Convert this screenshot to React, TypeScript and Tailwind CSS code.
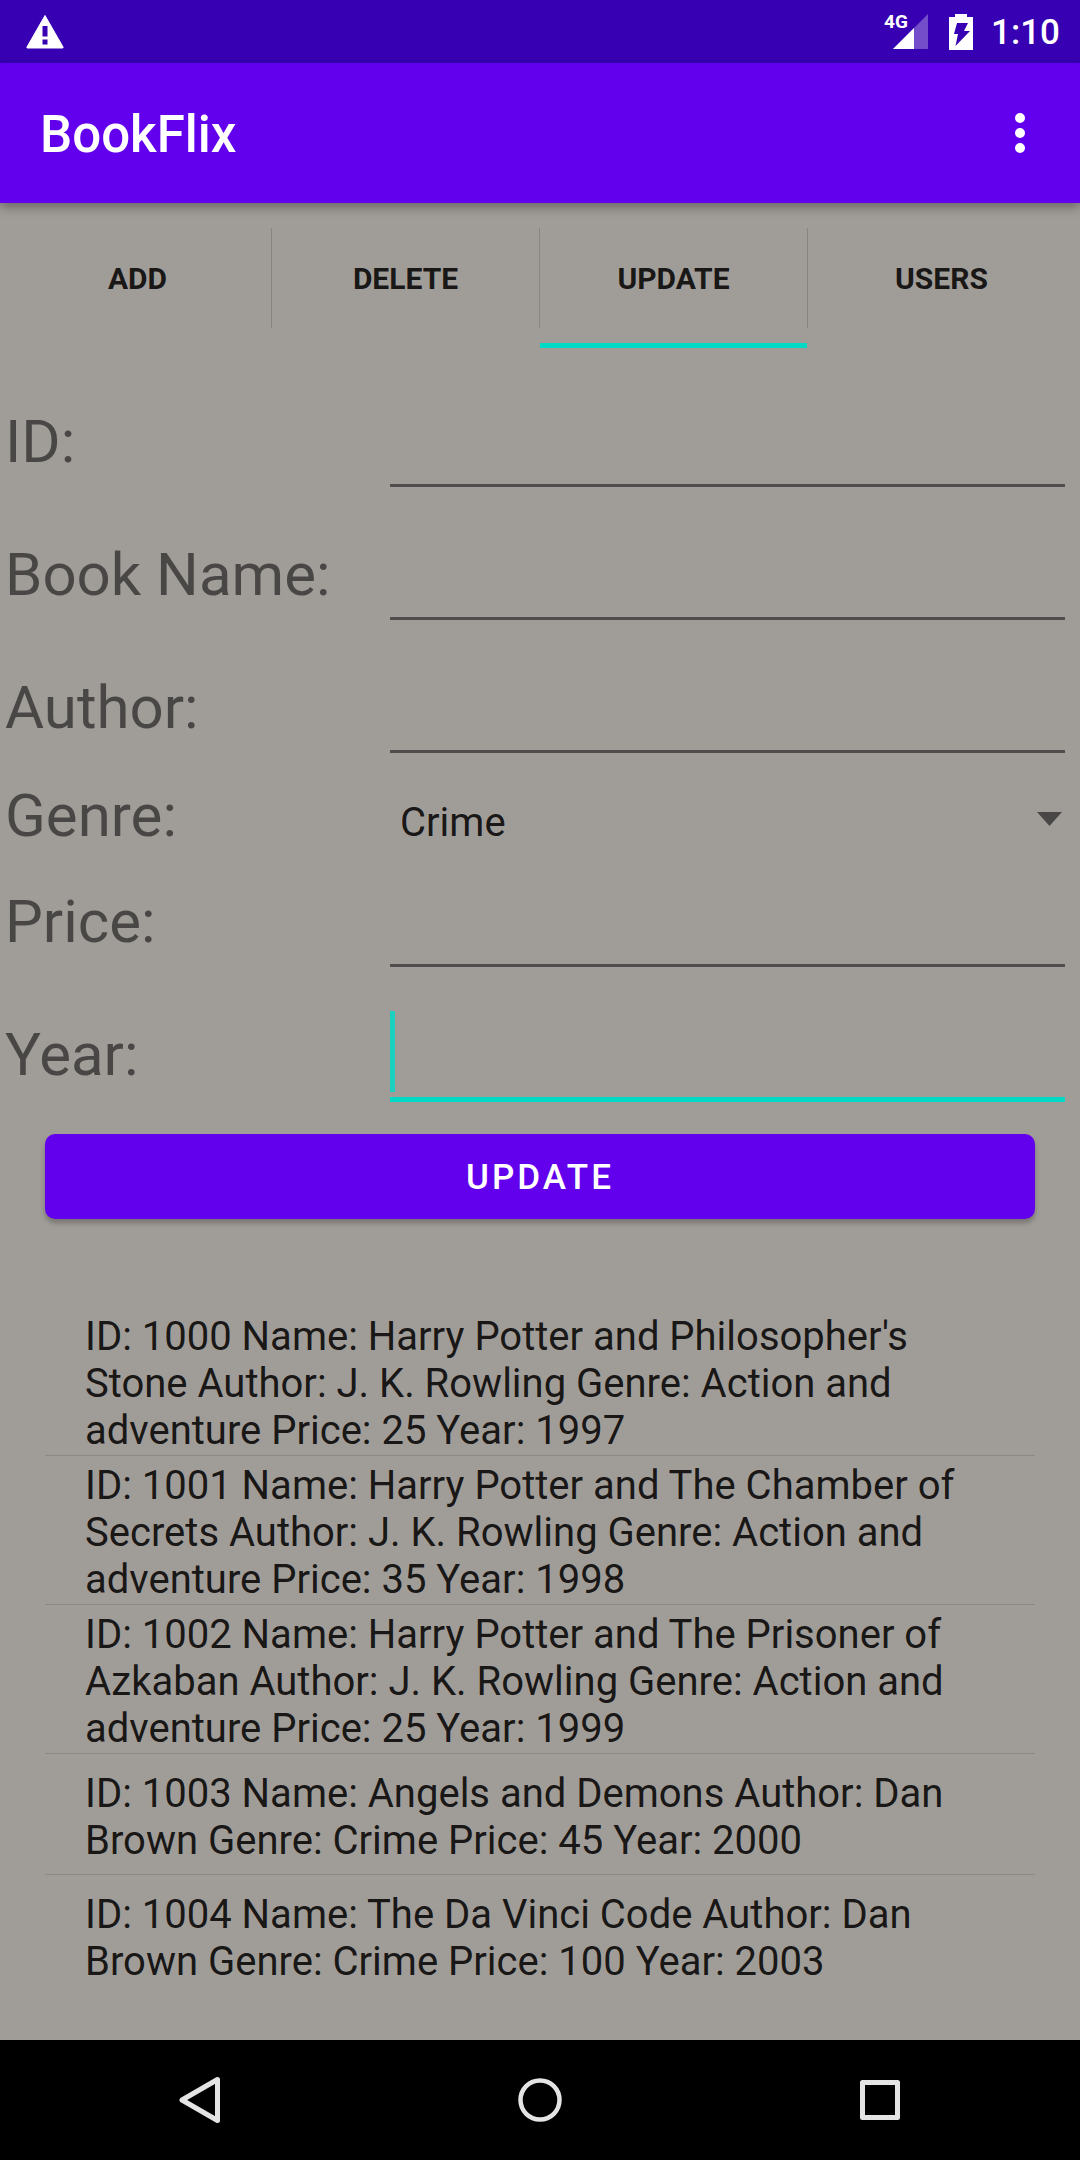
import { Fragment, useState } from "react";

type Book = {
  id: number;
  name: string;
  author: string;
  genre: string;
  price: number;
  year: number;
};

const BOOKS: Book[] = [
  { id: 1000, name: "Harry Potter and Philosopher's Stone", author: "J. K. Rowling", genre: "Action and adventure", price: 25, year: 1997 },
  { id: 1001, name: "Harry Potter and The Chamber of Secrets", author: "J. K. Rowling", genre: "Action and adventure", price: 35, year: 1998 },
  { id: 1002, name: "Harry Potter and The Prisoner of Azkaban", author: "J. K. Rowling", genre: "Action and adventure", price: 25, year: 1999 },
  { id: 1003, name: "Angels and Demons", author: "Dan Brown", genre: "Crime", price: 45, year: 2000 },
  { id: 1004, name: "The Da Vinci Code", author: "Dan Brown", genre: "Crime", price: 100, year: 2003 },
];

const TABS = ["ADD", "DELETE", "UPDATE", "USERS"];

function StatusBar() {
  return (
    <div className="flex h-[63px] items-center bg-[#3700b3] pr-5 pl-6 text-white">
      <svg className="h-9 w-[42px]" viewBox="0 0 42 36" fill="none">
        <path d="M21 1.500 L39 33 Q39.500 34 38.500 34 L3.500 34 Q2.500 34 3 33 Z" fill="#fff" stroke="#fff" strokeLinejoin="round" />
        <path d="M18.500 12h5v10.500h-5zM18.500 25.500h5v5h-5z" fill="#3700b3" />
      </svg>
      <div className="ml-auto flex items-center">
        <div className="relative h-9 w-11">
          <span className="absolute top-0 left-0 text-[19px] leading-4 font-bold">4G</span>
          <svg className="h-9 w-11" viewBox="0 0 44 36">
            <path d="M44 0V35H9Z" fill="#fff" fillOpacity="0.3" />
            <path d="M30 14V35H9Z" fill="#fff" />
          </svg>
        </div>
        <svg className="ml-[21px] h-9 w-6" viewBox="0 0 24 36">
          <path d="M6 0h12v3h6v33H0V3h6z" fill="#fff" />
          <path d="M8 9h11l-4 8h6L6.500 32l2.500-12H5z" fill="#3700b3" />
        </svg>
        <span className="ml-[18px] pt-0.5 text-[35px] leading-none font-medium">1:10</span>
      </div>
    </div>
  );
}

function AppBar() {
  return (
    <header className="relative z-10 flex h-[140px] items-center justify-between bg-[#6200ee] pr-[35px] pl-10 text-white shadow-[0_4px_10px_rgba(0,0,0,0.35)]">
      <h1 className="pt-0.5 text-[51px] leading-none font-medium">BookFlix</h1>
      <button type="button" aria-label="More options" className="px-5 py-3">
        <svg className="h-10 w-[10px]" viewBox="0 0 10 40" fill="#fff">
          <circle cx="5" cy="5" r="5" />
          <circle cx="5" cy="20" r="5" />
          <circle cx="5" cy="35" r="5" />
        </svg>
      </button>
    </header>
  );
}

function TabBar({ active, onSelect }: { active: string; onSelect: (tab: string) => void }) {
  return (
    <nav className="mt-[5px] flex h-[140px] pr-[5px] pl-1" role="tablist">
      {TABS.map((tab, i) => (
        <Fragment key={tab}>
          {i > 0 && <div className="my-5 w-px bg-black/15" />}
          <button
            type="button"
            role="tab"
            aria-selected={tab === active}
            onClick={() => onSelect(tab)}
            className={
              tab === active
                ? "flex-1 basis-0 border-y-[5px] border-t-transparent border-b-[#03dac5] text-[30px] font-bold"
                : "flex-1 basis-0 border-y-[5px] border-transparent text-[30px] font-bold"
            }
          >
            {tab}
          </button>
        </Fragment>
      ))}
    </nav>
  );
}

function Field({ id, label, focused = false }: { id: string; label: string; focused?: boolean }) {
  return (
    <div className="flex h-[133px]">
      <label htmlFor={id} className="w-[385px] pt-[39px] text-[60px] leading-[70px] text-black/54">
        {label}
      </label>
      <div className="relative flex-1">
        <input
          id={id}
          type="text"
          className={
            focused
              ? "h-[121px] w-full border-b-[5px] border-[#03dac5] bg-transparent pt-8 text-[60px] caret-transparent outline-none"
              : "h-[119px] w-full border-b-[3px] border-black/50 bg-transparent pt-8 text-[60px] outline-none"
          }
        />
        {focused && <div className="absolute top-[30px] left-0 h-[81px] w-[5px] bg-[#1bd0be]" />}
      </div>
    </div>
  );
}

function GenreField() {
  return (
    <div className="flex h-[81px]">
      <label htmlFor="genre" className="w-[385px] pt-[14px] text-[60px] leading-[70px] text-black/54">
        Genre:
      </label>
      <div className="relative flex-1">
        <select
          id="genre"
          defaultValue="Crime"
          className="mt-[32px] h-[47px] w-full appearance-none bg-transparent pl-[10px] text-[40px] leading-[47px] outline-none"
        >
          <option>Crime</option>
          <option>Action and adventure</option>
        </select>
        <svg className="pointer-events-none absolute top-[45px] right-[3px] h-[14px] w-[25px]" viewBox="0 0 25 14">
          <path d="M0 0h25L12.500 14z" fill="#000" fillOpacity="0.54" />
        </svg>
      </div>
    </div>
  );
}

function BookList() {
  return (
    <ul className="mx-[45px] mt-[88px] text-[40px] leading-[47px]">
      {BOOKS.map((b) => (
        <li
          key={b.id}
          className="box-content flex min-h-[113px] items-center border-b border-black/12 px-10 pt-[6px] pb-px last:border-b-0"
        >
          {`ID: ${b.id} Name: ${b.name} Author: ${b.author} Genre: ${b.genre} Price: ${b.price} Year: ${b.year}`}
        </li>
      ))}
    </ul>
  );
}

function NavigationBar() {
  return (
    <div className="mt-auto flex h-[120px] items-center bg-black">
      <div className="flex flex-1 justify-end">
        <button type="button" aria-label="Back">
          <svg className="h-12 w-11" viewBox="0 0 44 48" fill="none" stroke="#e4e4e4" strokeWidth="5" strokeLinejoin="round">
            <path d="M41.500 3.500V44.500L6 24Z" />
          </svg>
        </button>
      </div>
      <button type="button" aria-label="Home" className="mx-[296px]">
        <svg className="h-12 w-12" viewBox="0 0 48 48" fill="none" stroke="#e4e4e4" strokeWidth="4.500">
          <circle cx="24" cy="24" r="19.500" />
        </svg>
      </button>
      <div className="flex flex-1">
        <button type="button" aria-label="Recent apps">
          <svg className="h-12 w-11" viewBox="0 0 44 48" fill="none" stroke="#e4e4e4" strokeWidth="5" strokeLinejoin="round">
            <rect x="2.500" y="6.500" width="35" height="35" />
          </svg>
        </button>
      </div>
    </div>
  );
}

export default function App() {
  const [tab, setTab] = useState("UPDATE");
  return (
    <div className="flex min-h-screen flex-col bg-[#a09c98] font-['Roboto',sans-serif] text-black/87">
      <StatusBar />
      <AppBar />
      <main>
        <TabBar active={tab} onSelect={setTab} />
        <form className="pt-5" onSubmit={(e) => e.preventDefault()}>
          <div className="pr-[15px] pl-[5px]">
            <Field id="book-id" label="ID:" />
            <Field id="book-name" label="Book Name:" />
            <Field id="author" label="Author:" />
            <GenreField />
            <Field id="price" label="Price:" />
            <Field id="year" label="Year:" focused />
          </div>
          <div className="px-[45px] pt-5">
            <button
              type="submit"
              className="h-[85px] w-full rounded-[10px] bg-[#6200ee] pt-1 text-[35px] font-medium tracking-[3px] text-white shadow-[0_4px_5px_rgba(0,0,0,0.25)]"
            >
              UPDATE
            </button>
          </div>
        </form>
        <BookList />
      </main>
      <NavigationBar />
    </div>
  );
}
